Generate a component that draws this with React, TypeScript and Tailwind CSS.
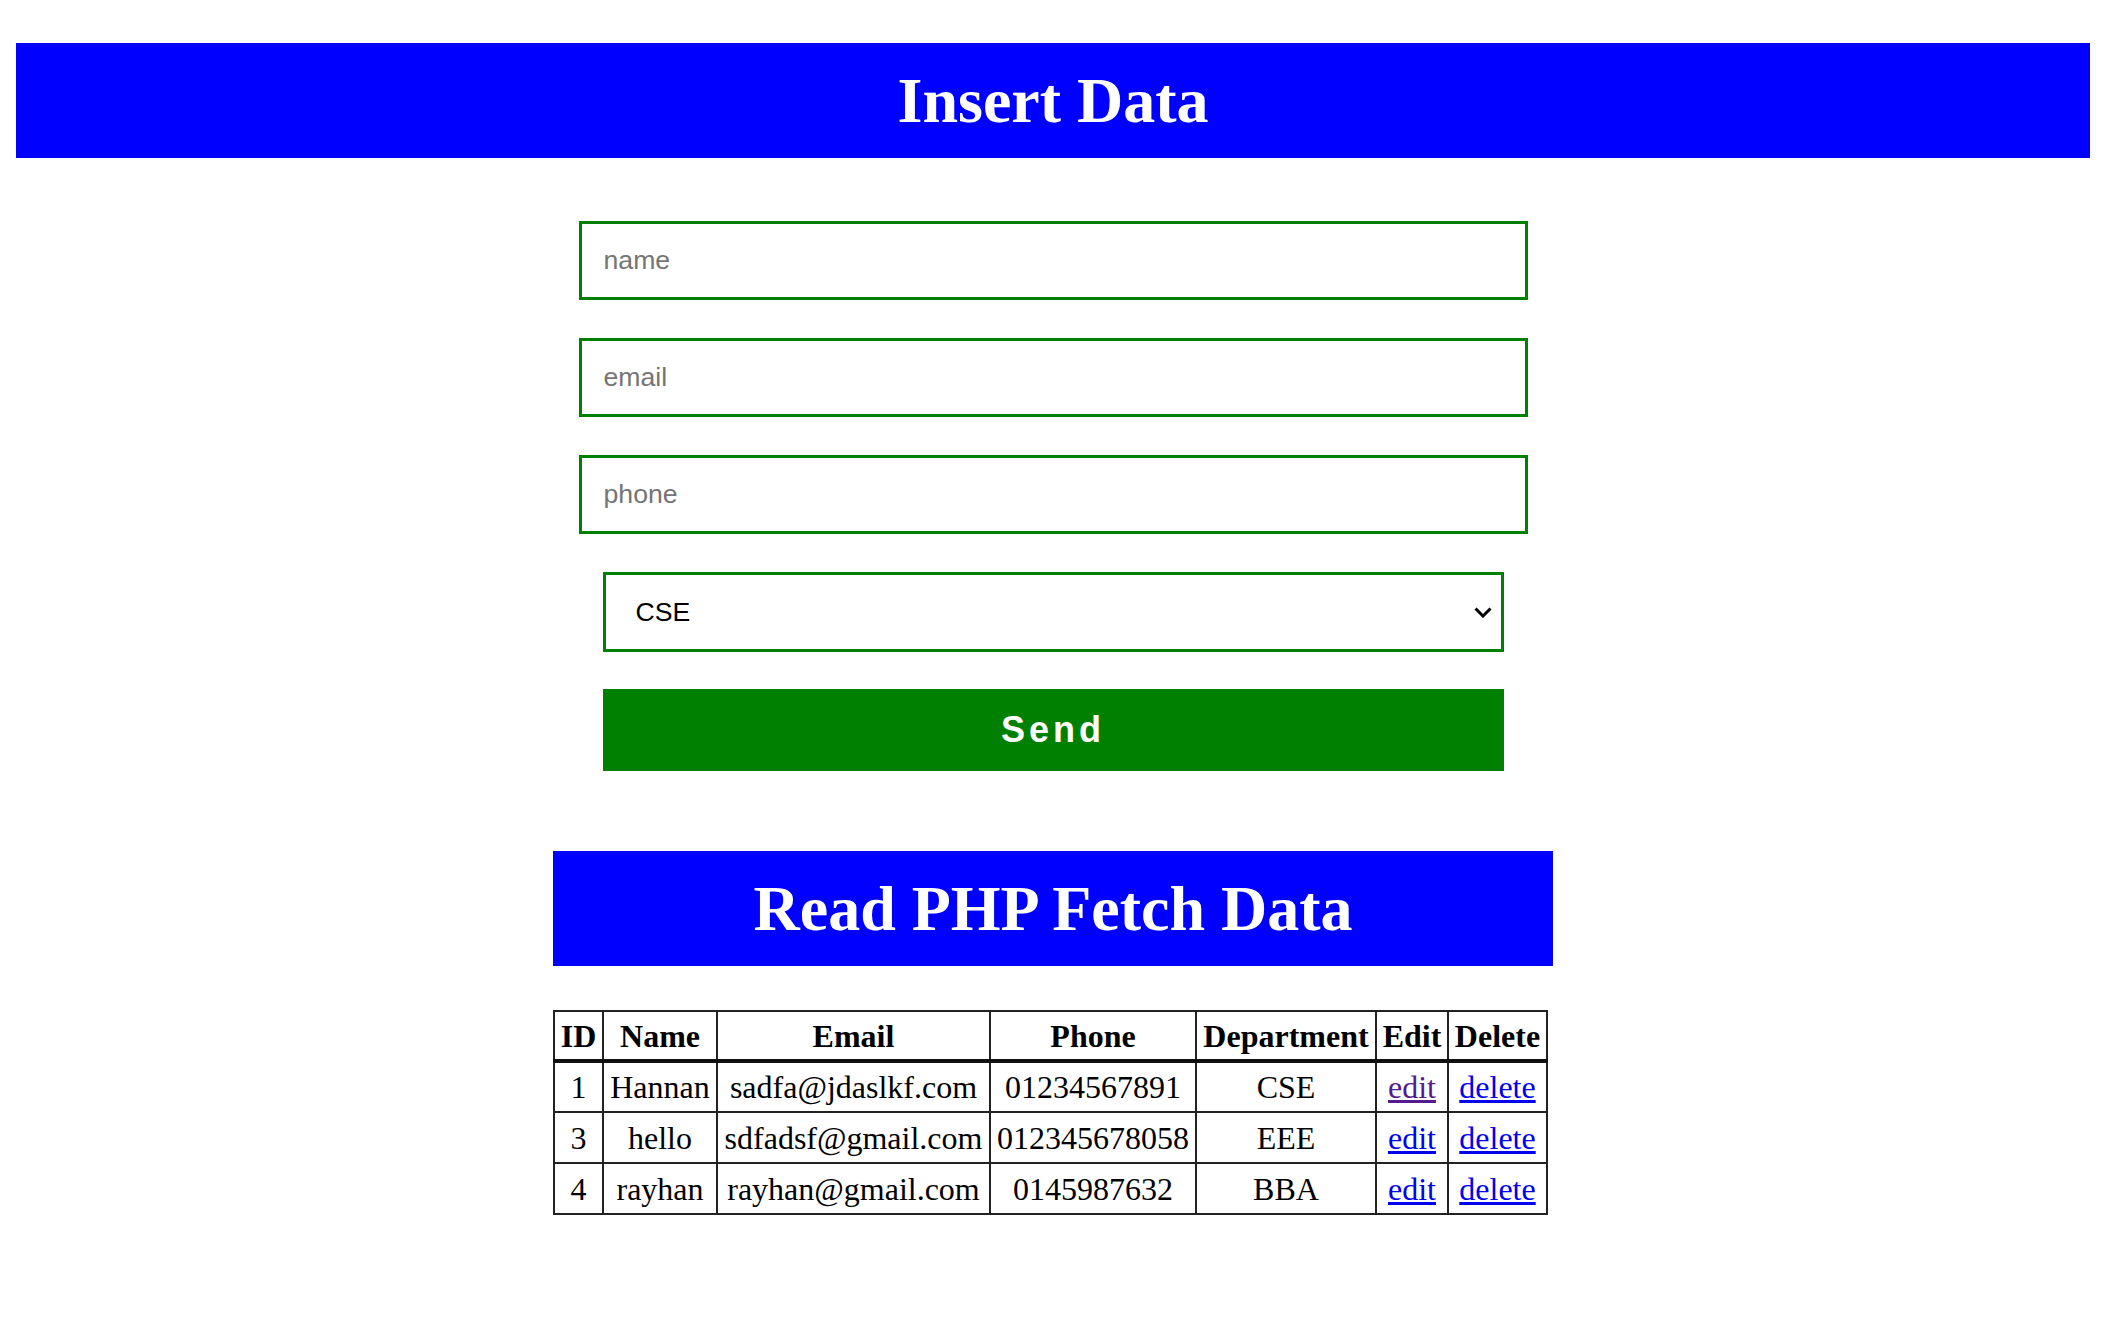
import { useState } from 'react'

const rows = [
  { id: 1, name: 'Hannan', email: 'sadfa@jdaslkf.com', phone: '01234567891', dept: 'CSE', visited: true },
  { id: 3, name: 'hello', email: 'sdfadsf@gmail.com', phone: '012345678058', dept: 'EEE', visited: false },
  { id: 4, name: 'rayhan', email: 'rayhan@gmail.com', phone: '0145987632', dept: 'BBA', visited: false },
]

const serif = { fontFamily: '"Liberation Serif", "Times New Roman", serif' }

export default function App() {
  const [dept, setDept] = useState('CSE')

  return (
    <div className="min-h-screen bg-white px-4 pt-[43px] pb-16 text-black" style={serif}>
      {/* Insert header */}
      <h1 className="flex h-[115px] items-center justify-center bg-[#0000ff] text-[64px] font-bold leading-none text-white">
        Insert Data
      </h1>

      {/* Form */}
      <form className="mt-[63px] flex flex-col items-center" onSubmit={(e) => e.preventDefault()}>
        {['name', 'email', 'phone'].map((p, i) => (
          <input
            key={p}
            type="text"
            placeholder={p}
            className={`h-[79px] w-[949px] border-[3px] border-[#008000] bg-white pl-[22px] font-['Liberation_Sans',Arial,sans-serif] text-[26.67px] text-black outline-none placeholder:text-[#757575] ${i > 0 ? 'mt-[38px]' : ''}`}
          />
        ))}

        <div className="relative mt-[38px] w-[901px]">
          <select
            value={dept}
            onChange={(e) => setDept(e.target.value)}
            className="h-[80px] w-full appearance-none border-[3px] border-[#008000] bg-white pl-[30px] font-['Liberation_Sans',Arial,sans-serif] text-[26.67px] text-black outline-none"
          >
            <option>CSE</option>
            <option>EEE</option>
            <option>BBA</option>
          </select>
          {/* chevron */}
          <svg
            className="pointer-events-none absolute right-[12px] top-[35px]"
            width="18"
            height="11"
            viewBox="0 0 18 11"
            fill="none"
          >
            <path d="M1.5 1.5 L9 9 L16.5 1.5" stroke="#000" strokeWidth="3" />
          </svg>
        </div>

        <button
          type="submit"
          className="mt-[37px] h-[82px] w-[901px] bg-[#008000] font-['Liberation_Sans',Arial,sans-serif] text-[36px] font-bold tracking-[4px] text-white"
        >
          Send
        </button>
      </form>

      {/* Read section */}
      <div className="mx-auto mt-[80px] w-[1000px]">
        <h2 className="flex h-[115px] items-center justify-center bg-[#0000ff] text-[64px] font-bold leading-none text-white">
          Read PHP Fetch Data
        </h2>

        <table className="mt-[44px] border-collapse border-2 border-[#222] text-center text-[32px] leading-[40px]">
          <thead>
            <tr className="h-[50px] border-b-[4px] border-[#111]">
              <th className="w-[49px] border-2 border-[#222] px-0">ID</th>
              <th className="w-[114px] border-2 border-[#222] px-0">Name</th>
              <th className="w-[273px] border-2 border-[#222] px-0">Email</th>
              <th className="w-[206px] border-2 border-[#222] px-0">Phone</th>
              <th className="w-[180px] border-2 border-[#222] px-0">Department</th>
              <th className="w-[72px] border-2 border-[#222] px-0">Edit</th>
              <th className="w-[99px] border-2 border-[#222] px-0">Delete</th>
            </tr>
          </thead>
          <tbody>
            {rows.map((r) => (
              <tr key={r.id} className="h-[51px]">
                <td className="border-2 border-[#222]">{r.id}</td>
                <td className="border-2 border-[#222]">{r.name}</td>
                <td className="border-2 border-[#222]">{r.email}</td>
                <td className="border-2 border-[#222]">{r.phone}</td>
                <td className="border-2 border-[#222]">{r.dept}</td>
                <td className="border-2 border-[#222]">
                  <a href="#" className={`underline ${r.visited ? 'text-[#551a8b]' : 'text-[#0000ee]'}`}>
                    edit
                  </a>
                </td>
                <td className="border-2 border-[#222]">
                  <a href="#" className="text-[#0000ee] underline">
                    delete
                  </a>
                </td>
              </tr>
            ))}
          </tbody>
        </table>
      </div>
    </div>
  )
}
